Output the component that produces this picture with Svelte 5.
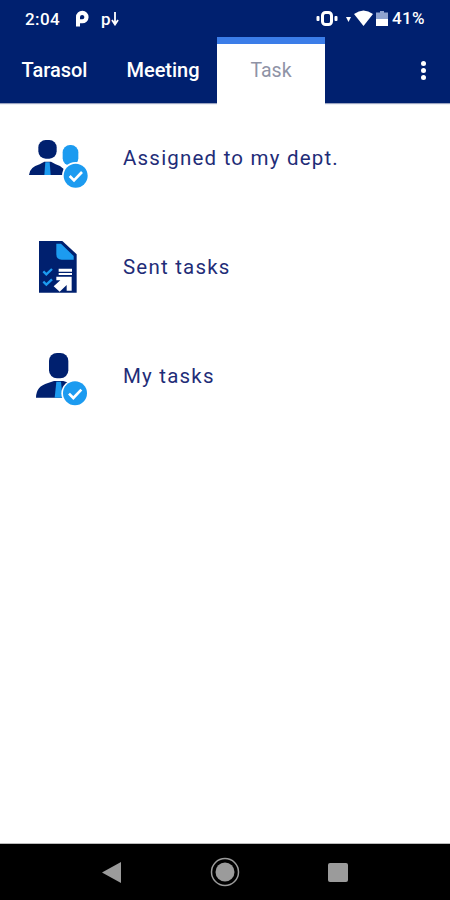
<script>
	const tabs = ['Tarasol', 'Meeting', 'Task'];
</script>

<div class="screen">
	<header class="appbar">
		<div class="status">
			<div class="status__left">
				<span class="time">2:04</span>
				<svg class="p-icon" width="14" height="17" viewBox="0 0 14 17"><path d="M1 16.500V7a6.300 6.300 0 1 1 6 6.300H5v3.200z M5 7v2.300h2a2.200 2.200 0 1 0-2-2.300z" fill="#fff" fill-rule="evenodd" /></svg>
				<span class="pl">p<svg width="8" height="15" viewBox="0 0 8 15"><path d="M4 1v12M1 9l3 4.500L7 9" fill="none" stroke="#fff" stroke-width="1.800" /></svg></span>
			</div>
			<div class="status__right">
				<svg width="22" height="15" viewBox="0 0 22 15"><rect x="6.500" y="1.500" width="9" height="12" rx="3" fill="none" stroke="#fff" stroke-width="3" /><rect x="0.500" y="5" width="3" height="5" rx="1" fill="#fff" /><rect x="18.500" y="5" width="3" height="5" rx="1" fill="#fff" /></svg>
				<svg class="tri" width="5" height="5" viewBox="0 0 5 5"><path d="M0 0h5L2.500 5z" fill="#fff" /></svg>
				<svg class="wifi" width="19" height="16" viewBox="0 0 19 16"><path d="M0 4Q9.500-3 19 4L9.500 16z" fill="#fff" /></svg>
				<svg class="batt" width="12" height="15" viewBox="0 0 12 15"><path d="M4 0h4v1.500h4V15H0V1.500h4z" fill="#8fa3cf" /><rect y="8" width="12" height="7" fill="#fff" /></svg>
				<span class="pct">41%</span>
			</div>
		</div>
		<nav class="tabs">
			{#each tabs as tab}
				<button class="tab" class:active={tab === 'Task'}>{tab}</button>
			{/each}
			<span class="more"><i></i><i></i><i></i></span>
		</nav>
	</header>

	<main class="list">
		<div class="row">
			<svg class="icon" viewBox="0 -6 270 210">
				<rect x="70" y="45" width="55" height="56" rx="22" fill="#00206f" />
				<path d="M42 150q2-24 32-32l14-8h20l14 8q14 4 24 14v18z" fill="#00206f" />
				<path d="M91 112h13l3 38H88z" fill="#1c9bf0" />
				<rect x="143" y="60" width="47" height="62" rx="22" fill="#1c9bf0" />
				<circle cx="182" cy="152" r="41" fill="#fff" />
				<circle cx="182" cy="152" r="36" fill="#1c9bf0" />
				<path d="M164 153l13 13 24-25" fill="none" stroke="#fff" stroke-width="8" />
			</svg>
			<span>Assigned to my dept.</span>
		</div>
		<div class="row">
			<svg class="icon" viewBox="0 6 270 210">
				<path d="M72 33h70l43 40v115H72z" fill="#00206f" />
				<path d="M124 41h14l38 37v11h-36q-16 0-16-16z" fill="#1c9bf0" />
				<path d="M85 124l9 9 17-16M85 155l9 9 17-16" fill="none" stroke="#1c9bf0" stroke-width="7" />
				<path d="M131 116h40v9h-40zM131 129h40v6h-40z" fill="#fff" />
				<path d="M124 140h46v42h-15v-17l-21 20-18-16 20-18h-12z" fill="#fff" />
			</svg>
			<span>Sent tasks</span>
		</div>
		<div class="row">
			<svg class="icon" viewBox="0 -12 270 210">
				<rect x="102" y="24" width="58" height="76" rx="24" fill="#00206f" />
				<path d="M63 158q0-34 36-44l18-6h28l18 6q16 5 20 14v30z" fill="#00206f" />
				<path d="M124 110h14l5 48h-24z" fill="#1c9bf0" />
				<circle cx="180" cy="145" r="41" fill="#fff" />
				<circle cx="180" cy="145" r="36" fill="#1c9bf0" />
				<path d="M162 146l13 13 24-25" fill="none" stroke="#fff" stroke-width="8" />
			</svg>
			<span>My tasks</span>
		</div>
	</main>

	<footer class="navbar">
		<svg width="20" height="21" viewBox="0 0 20 21"><path d="M19 0v21L0 10.500z" fill="#9b9b9b" /></svg>
		<svg width="30" height="30" viewBox="0 0 30 30"><circle cx="15" cy="15" r="13.500" fill="none" stroke="#9b9b9b" stroke-width="1.500" /><circle cx="15" cy="15" r="9.500" fill="#9b9b9b" /></svg>
		<span class="square"></span>
	</footer>
</div>

<style>
	:global(body) {
		background: #fff;
	}

	.screen {
		display: flex;
		flex-direction: column;
		height: 900px;
		font-family: Roboto, sans-serif;
	}

	.appbar {
		background: #00206f;
		color: #fff;
		flex: none;
	}

	.status {
		height: 37px;
		display: flex;
		justify-content: space-between;
		align-items: center;
		padding: 0 25px;
		font-size: 17px;
		font-weight: 500;
		letter-spacing: 0.4px;
	}

	.status__left,
	.status__right {
		display: flex;
		align-items: center;
	}

	.status__left {
		gap: 15px;
	}

	.status__right {
		margin-top: -1px;
	}

	.pl {
		display: flex;
		align-items: center;
		margin-left: -3px;
	}

	.tri {
		margin: 3px 3px 0 8px;
	}

	.wifi {
		margin-right: 3px;
	}

	.pct {
		margin-left: 4px;
	}

	.tabs {
		height: 66px;
		display: flex;
		position: relative;
		box-shadow: 0 1px 1px #9aa3c0;
	}

	.tab {
		border: 0;
		background: none;
		color: #fff;
		font: 500 20px Roboto, sans-serif;
		padding: 0;
		height: 66px;
		width: 108px;
		box-sizing: border-box;
	}

	.tab:first-child {
		width: 109px;
	}

	.tab.active {
		background: #fff;
		border-top: 7px solid #3b7de8;
		box-shadow: 0 2px 0 #fff;
		color: #8f93a6;
		font-size: 19.500px;
		font-weight: 400;
		padding-bottom: 7px;
	}

	.more {
		position: absolute;
		right: 24px;
		top: 24px;
		display: flex;
		flex-direction: column;
		gap: 2px;
	}

	.more i {
		width: 5px;
		height: 5px;
		border-radius: 50%;
		background: #fff;
	}

	.list {
		flex: 1;
	}

	.row {
		height: 109px;
		display: flex;
		align-items: center;
		gap: 18px;
		padding-left: 15px;
		color: #1f2d78;
		font-size: 20.500px;
		letter-spacing: 1.2px;
	}

	.icon {
		width: 90px;
		height: 70px;
		flex: none;
	}

	.navbar {
		height: 57px;
		flex: none;
		background: #000;
		border-top: 1px solid #bbb;
		box-sizing: border-box;
		display: flex;
		align-items: center;
		justify-content: space-between;
		padding: 0 102px;
	}

	.square {
		width: 20px;
		height: 19px;
		border-radius: 2px;
		background: #9b9b9b;
	}
</style>
